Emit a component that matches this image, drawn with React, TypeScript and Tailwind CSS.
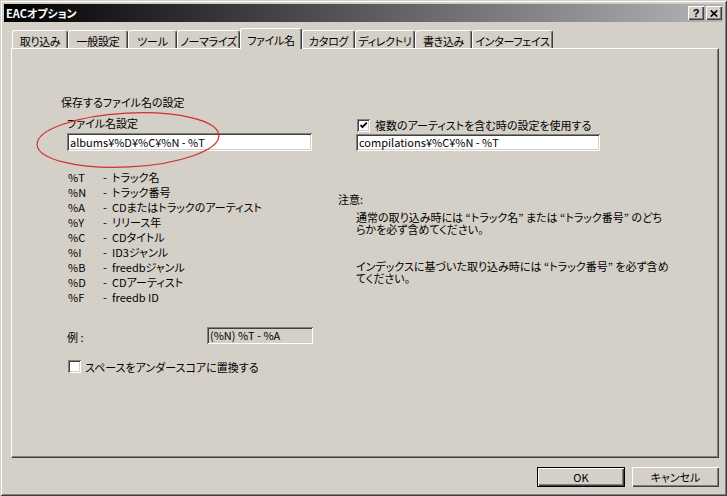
import React from "react";

const tabs: { label: string; w: number }[] = [
  { label: "取り込み", w: 56 },
  { label: "一般設定", w: 60 },
  { label: "ツール", w: 49 },
  { label: "ノーマライズ", w: 63 },
  { label: "ファイル名", w: 62 },
  { label: "カタログ", w: 53 },
  { label: "ディレクトリ", w: 60 },
  { label: "書き込み", w: 57 },
  { label: "インターフェイス", w: 81 },
];

const codes: [string, string][] = [
  ["%T", "トラック名"],
  ["%N", "トラック番号"],
  ["%A", "CDまたはトラックのアーティスト"],
  ["%Y", "リリース年"],
  ["%C", "CDタイトル"],
  ["%I", "ID3ジャンル"],
  ["%B", "freedbジャンル"],
  ["%D", "CDアーティスト"],
  ["%F", "freedb ID"],
];

const sunken =
  "shadow-[inset_1px_1px_0_#808080,inset_-1px_-1px_0_#ffffff,inset_2px_2px_0_#404040,inset_-2px_-2px_0_#d4d0c8]";
const raised =
  "shadow-[inset_1px_1px_0_#ffffff,inset_-1px_-1px_0_#404040,inset_-2px_-2px_0_#808080]";

function Check({ checked }: { checked: boolean }) {
  return (
    <div className={`w-[13px] h-[13px] bg-white ${sunken} flex items-center justify-center shrink-0`}>
      {checked && (
        <svg width="9" height="9" viewBox="0 0 9 9">
          <path d="M1.5 4 L3.5 6.2 L7.8 1.6" fill="none" stroke="#000" strokeWidth="1.8" />
        </svg>
      )}
    </div>
  );
}

export default function App() {
  return (
    <div className="relative w-[727px] h-[496px] overflow-hidden bg-[#d4d0c8] text-black text-[11px] font-['Noto_Sans_CJK_JP','Liberation_Sans',sans-serif] [font-feature-settings:'palt'] shadow-[inset_1px_1px_0_#d4d0c8,inset_-1px_-1px_0_#404040,inset_2px_2px_0_#ffffff,inset_-2px_-2px_0_#808080] pt-[4px] px-[4px] flex flex-col">
      {/* Title bar */}
      <div className="h-[18px] flex items-center bg-[linear-gradient(to_right,#000000,#b4b4b4)] pl-[2px] pr-[1px]">
        <span className="text-white font-bold leading-[18px] text-[11px]">EACオプション</span>
        <div className="ml-auto flex items-center gap-[2px]">
          <div className={`w-[16px] h-[14px] bg-[#d4d0c8] ${raised} flex items-center justify-center`}>
            <span className="font-['Liberation_Sans',sans-serif] font-bold text-[11px] leading-[11px] mt-[1px]">?</span>
          </div>
          <div className={`w-[16px] h-[14px] bg-[#d4d0c8] ${raised} flex items-center justify-center`}>
            <svg width="8" height="7" viewBox="0 0 8 7">
              <path d="M0.8 0.5 L7.2 6.5 M7.2 0.5 L0.8 6.5" stroke="#000" strokeWidth="1.7" />
            </svg>
          </div>
        </div>
      </div>

      {/* Body */}
      <div className="flex flex-col pl-[7px] pr-[4px] mt-[6px]">
        {/* Tabs */}
        <div className="flex items-end h-[20px] pl-[1px]">
          {tabs.map((t) => {
            const sel = t.label === "ファイル名";
            return (
              <div
                key={t.label}
                style={{ width: t.w }}
                className={
                  sel
                    ? "relative z-10 h-[21px] -mb-[1px] bg-[#d4d0c8] border-t border-l border-white border-r border-r-[#404040] rounded-t-[3px] shadow-[inset_-1px_0_0_#808080] text-center leading-[14px] pt-[4px] whitespace-nowrap tracking-[-0.3px]"
                    : "h-[18px] bg-[#d4d0c8] border-t border-l border-white border-r border-r-[#404040] rounded-t-[3px] shadow-[inset_-1px_0_0_#808080] text-center leading-[14px] pt-[3px] whitespace-nowrap tracking-[-0.3px]"
                }
              >
                {t.label}
              </div>
            );
          })}
        </div>

        {/* Panel */}
        <div className="h-[410px] w-[708px] border-t border-l border-white border-r border-b border-r-[#404040] border-b-[#404040] shadow-[inset_-1px_-1px_0_#808080] flex">
          {/* Left column */}
          <div className="ml-[55px] w-[246px] pt-[46px] flex flex-col">
            <div className="leading-[14px] -ml-[6px]">保存するファイル名の設定</div>
            <div className="leading-[14px] mt-[7px]">ファイル名設定</div>
            <div className={`mt-[3px] h-[18px] w-[245px] bg-white ${sunken} pl-[3px] leading-[18px] whitespace-nowrap`}>
              albums¥%D¥%C¥%N - %T
            </div>
            <div className="mt-[19px] flex flex-col">
              {codes.map(([c, d]) => (
                <div key={c} className="flex h-[15px] leading-[15px] whitespace-nowrap">
                  <span className="w-[36px] pl-[1px]">{c}</span>
                  <span className="w-[9px]">-</span>
                  <span>{d}</span>
                </div>
              ))}
            </div>
            <div className="mt-[22px] flex items-center h-[17px]">
              <span className="w-[140px] leading-[14px] mt-[3px]">例 :</span>
              <div className={`w-[106px] h-[17px] bg-[#d4d0c8] ${sunken} pl-[3px] leading-[17px] whitespace-nowrap`}>
                (%N) %T - %A
              </div>
            </div>
            <div className="mt-[16px] flex items-center h-[13px] pl-[1px]">
              <Check checked={false} />
              <span className="ml-[4px] leading-[14px] whitespace-nowrap">スペースをアンダースコアに置換する</span>
            </div>
          </div>

          {/* Right column */}
          <div className="ml-[25px] pt-[69px] flex flex-col">
            <div className="ml-[19px] flex items-center h-[14px]">
              <Check checked={true} />
              <span className="ml-[5px] leading-[14px] whitespace-nowrap">複数のアーティストを含む時の設定を使用する</span>
            </div>
            <div className={`ml-[18px] mt-[2px] h-[17px] w-[244px] bg-white ${sunken} pl-[3px] leading-[17px] whitespace-nowrap`}>
              compilations¥%C¥%N - %T
            </div>
            <div className="mt-[41px] leading-[14px]">注意:</div>
            <div className="ml-[18px] mt-[5px] leading-[12px] whitespace-nowrap">
              通常の取り込み時には “トラック名” または “トラック番号” のどち
              <br />
              らかを必ず含めてください。
            </div>
            <div className="ml-[18px] mt-[25px] leading-[12px] whitespace-nowrap">
              インデックスに基づいた取り込み時には “トラック番号” を必ず含め
              <br />
              てください。
            </div>
          </div>
        </div>

        {/* Buttons */}
        <div className="mt-[9px] flex justify-end gap-[7px]">
          <div className="w-[88px] h-[20px] border border-black bg-[#d4d0c8]">
            <div className={`w-full h-full ${raised} flex items-center justify-center leading-[14px]`}>OK</div>
          </div>
          <div className={`w-[87px] h-[20px] bg-[#d4d0c8] ${raised} flex items-center justify-center leading-[14px]`}>
            キャンセル
          </div>
        </div>
      </div>

      {/* Red annotation ellipse */}
      <svg className="absolute left-[30px] top-[105px] pointer-events-none" width="200" height="70" viewBox="0 0 200 70">
        <ellipse cx="98" cy="35" rx="91" ry="27" fill="none" stroke="#d2302c" strokeWidth="1.2" transform="rotate(-3 98 35)" />
      </svg>
    </div>
  );
}
